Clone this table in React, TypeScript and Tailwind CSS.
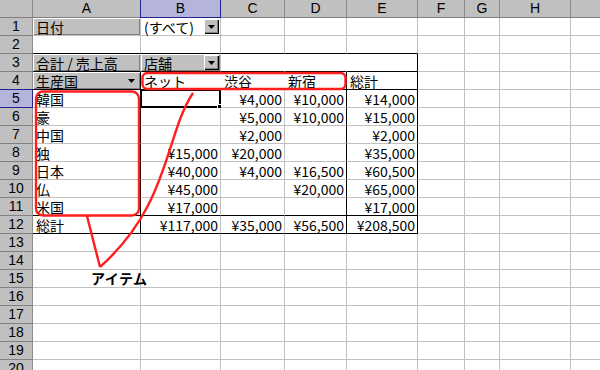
import React from "react";

const COLS = ["A", "B", "C", "D", "E", "F", "G", "H", ""];

const DATA: Record<number, string[]> = {
  5: ["韓国", "", "¥4,000", "¥10,000", "¥14,000"],
  6: ["豪", "", "¥5,000", "¥10,000", "¥15,000"],
  7: ["中国", "", "¥2,000", "", "¥2,000"],
  8: ["独", "¥15,000", "¥20,000", "", "¥35,000"],
  9: ["日本", "¥40,000", "¥4,000", "¥16,500", "¥60,500"],
  10: ["仏", "¥45,000", "", "¥20,000", "¥65,000"],
  11: ["米国", "¥17,000", "", "", "¥17,000"],
  12: ["総計", "¥117,000", "¥35,000", "¥56,500", "¥208,500"],
};

type Line = "black" | "gray" | "none";

function rightLine(r: number, c: number): Line {
  if (r === 3) {
    if (c === 5) return "black";
    if (c === 3 || c === 4) return "none";
  }
  if (r === 4) {
    if (c === 1 || c === 4 || c === 5) return "black";
    if (c === 2 || c === 3) return "none";
  }
  if (r >= 5 && r <= 12) {
    if (c === 1 || c === 4 || c === 5) return "black";
  }
  return "gray";
}

function bottomLine(r: number, c: number): Line {
  if ((r === 2 || r === 3 || r === 4 || r === 11 || r === 12) && c >= 1 && c <= 5) return "black";
  return "gray";
}

function DropBtn({ flat }: { flat?: boolean }) {
  return (
    <div
      className={
        flat
          ? "w-[15px] h-[15px] flex items-center justify-center bg-[#c0c0c0]"
          : "w-[15px] h-[15px] flex items-center justify-center bg-[#c0c0c0] shadow-[inset_1px_1px_0_#ffffff,inset_-1px_-1px_0_#000000,inset_-2px_-2px_0_#808080]"
      }
    >
      <svg width="7" height="4" viewBox="0 0 7 4" className="mt-[1px]">
        <path d="M0 0 H7 L3.5 4 Z" fill="#000" />
      </svg>
    </div>
  );
}

function BodyCell({ r, c }: { r: number; c: number }) {
  const rl = rightLine(r, c);
  const bl = bottomLine(r, c);
  const rCls =
    rl === "black" ? "border-r-black" : rl === "none" ? "border-r-white" : "border-r-[#c0c0c0]";
  const bCls = bl === "black" ? "border-b-black" : "border-b-[#c0c0c0]";

  const isButton = (r === 1 && c === 1) || (r === 3 && (c === 1 || c === 2)) || (r === 4 && c === 1);
  const bg = isButton
    ? "bg-[#c0c0c0] shadow-[inset_1px_1px_0_#ffffff,inset_-1px_-1px_0_#808080]"
    : "bg-white";

  let text = "";
  let right = false;
  let drop: null | "flat" | "btn" = null;
  if (r === 1 && c === 1) text = "日付";
  if (r === 1 && c === 2) {
    text = "(すべて)";
    drop = "btn";
  }
  if (r === 3 && c === 1) text = "合計 / 売上高";
  if (r === 3 && c === 2) {
    text = "店舗";
    drop = "btn";
  }
  if (r === 4 && c === 1) {
    text = "生産国";
    drop = "flat";
  }
  if (r === 4 && c === 2) text = "ネット";
  if (r === 4 && c === 3) text = "渋谷";
  if (r === 4 && c === 4) text = "新宿";
  if (r === 4 && c === 5) text = "総計";
  if (DATA[r] && c <= 5) {
    text = DATA[r][c - 1];
    right = c >= 2;
  }
  const selected = r === 5 && c === 2;

  return (
    <div
      className={`relative border-r border-b ${rCls} ${bCls} ${bg} flex items-stretch whitespace-nowrap`}
    >
      <div
        className={`flex-1 min-w-0 flex items-center text-[14px] leading-[16px] text-black font-['Noto_Sans_CJK_JP',sans-serif] ${
          right ? "justify-end pr-[2px]" : "justify-start pl-[3px]"
        }`}
      >
        {text}
      </div>
      {drop && (
        <div className="flex items-center pr-[1px]">
          <DropBtn flat={drop === "flat"} />
        </div>
      )}
      {selected && (
        <>
          <div className="absolute -left-[1px] -top-[1px] w-[calc(100%+2px)] h-[calc(100%+2px)] border-2 border-black pointer-events-none" />
          <div className="absolute -right-[3px] -bottom-[3px] w-[6px] h-[6px] bg-black border border-white pointer-events-none" />
        </>
      )}
    </div>
  );
}

export default function App() {
  const rows = Array.from({ length: 20 }, (_, i) => i + 1);
  return (
    <div className="relative w-[600px] h-[370px] overflow-hidden bg-white">
      <div className="grid grid-cols-[33px_108px_80px_64px_62px_71px_47px_35px_71px_64px] auto-rows-[18px]">
        <div className="bg-[#c0c0c0] border-r border-b border-r-[#8c8c8c] border-b-[#808080]" />
        {COLS.map((l, i) => (
          <div
            key={i}
            className={
              i === 1
                ? "bg-[#b4b4dc] border-r border-b border-l border-r-[#24248c] border-b-[#24248c] border-l-[#24248c] -ml-[1px] flex items-center justify-center text-[14px] font-['Liberation_Sans',sans-serif] text-black"
                : "bg-[#c0c0c0] border-r border-b border-r-[#8c8c8c] border-b-[#808080] flex items-center justify-center text-[14px] font-['Liberation_Sans',sans-serif] text-black"
            }
          >
            {l}
          </div>
        ))}
        {rows.map((r) => (
          <React.Fragment key={r}>
            <div
              className={
                r === 5
                  ? "bg-[#b4b4dc] border-r border-b border-t border-r-[#24248c] border-b-[#24248c] border-t-[#24248c] -mt-[1px] h-[19px] flex items-center justify-center text-[14px] font-['Liberation_Sans',sans-serif] text-black"
                  : "bg-[#c0c0c0] border-r border-b border-r-[#8c8c8c] border-b-[#808080] flex items-center justify-center text-[14px] font-['Liberation_Sans',sans-serif] text-black"
              }
            >
              {r}
            </div>
            {COLS.map((_, ci) => (
              <BodyCell key={ci} r={r} c={ci + 1} />
            ))}
          </React.Fragment>
        ))}
      </div>

      <svg className="absolute inset-0 pointer-events-none" width="600" height="370" viewBox="0 0 600 370">
        <rect x="36" y="91.5" width="103" height="124" rx="7" fill="none" stroke="#ff1e1e" strokeWidth="2.4" />
        <rect x="142.5" y="73" width="203" height="16" rx="5" fill="none" stroke="#ff1e1e" strokeWidth="2.4" />
        <path d="M193 93 C165 135 170 205 100 267" fill="none" stroke="#ff1e1e" strokeWidth="2.4" />
        <path d="M87 216 L100 267" fill="none" stroke="#ff1e1e" strokeWidth="2.4" />
      </svg>
      <div className="absolute left-[91px] top-[270px] text-[14px] leading-[16px] font-bold text-black font-['Noto_Sans_CJK_JP',sans-serif] tracking-[0.5px]">
        アイテム
      </div>
    </div>
  );
}
